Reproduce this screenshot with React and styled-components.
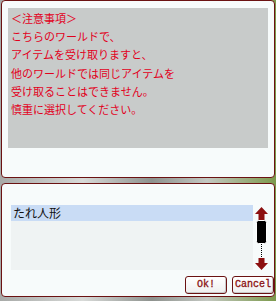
import React from 'react'
import styled, { createGlobalStyle } from 'styled-components';

const Global = createGlobalStyle`
    html, body {
        margin: 0;
        padding: 0;
        width: 276px;
        height: 301px;
        overflow: hidden;
        background: linear-gradient(to right, #a8aaa8 0%, #d8dad8 30%, #8e928e 55%, #c4c8c2 75%, #7c9a4c 100%);
    }
`;

const Screen = styled.div`
    width: 276px;
    height: 301px;
    display: flex;
    flex-direction: column;
    gap: 5px;
    padding: 0 1px;
    box-sizing: border-box;
    font-family: "Noto Sans CJK JP", "Noto Sans", sans-serif;
`;

const Panel = styled.div`
    width: 274px;
    height: ${p => p.h}px;
    box-sizing: border-box;
    border: 1px solid #6b1212;
    border-radius: 4px;
    background: #f7fbfb;
    display: flex;
    flex-direction: column;
`;

const Notice = styled.div`
    margin: 7px 6px 0 6px;
    height: 140px;
    background: #c8cbca;
    padding: 1px 3px;
    box-sizing: border-box;
    color: #e2001c;
    font-size: 11px;
    line-height: 18.2px;
    white-space: pre;
`;

const ListRow = styled.div`
    display: flex;
    margin: 21px 0 0 9px;
    height: 65px;
`;

const List = styled.div`
    width: 242px;
    background: #eff3f3;
`;

const Item = styled.div`
    height: 16px;
    background: ${p => p.selected ? '#c9dcf5' : 'transparent'};
    color: #111;
    font-size: 12px;
    line-height: 16px;
    padding-left: 2px;
`;

const Scroll = styled.svg`
    width: 16px;
    height: 65px;
    display: block;
`;

const Buttons = styled.div`
    display: flex;
    justify-content: flex-end;
    gap: 5px;
    margin-top: 6px;
`;

const Button = styled.button`
    width: 42px;
    height: 18px;
    box-sizing: border-box;
    border: 1px solid #6b1212;
    border-radius: 3px;
    background: linear-gradient(#ffffff, #eeeeee);
    box-shadow: inset -1px -1px 0 #c8c8c8;
    color: #8a1010;
    font-family: "Liberation Mono", "DejaVu Sans Mono", monospace;
    font-weight: normal;
    font-size: 10px;
    padding: 0;
    line-height: 16px;
    -webkit-text-stroke: 0.3px #8a1010;
`;

const notice = `＜注意事項＞
こちらのワールドで、
アイテムを受け取りますと、
他のワールドでは同じアイテムを
受け取ることはできません。
慎重に選択してください。`;

export default function App() {
    return (
        <Screen>
            <Global />
            <Panel h={178}>
                <Notice>{notice}</Notice>
            </Panel>
            <Panel h={114}>
                <ListRow>
                    <List>
                        <Item selected>たれ人形</Item>
                    </List>
                    <Scroll viewBox="0 0 16 65">
                        <path d="M8.5 2 L15 9 L11.5 9 L11.5 15 L5.5 15 L5.5 9 L2 9 Z" fill="#8c1010" />
                        <rect x="3.5" y="15.5" width="10" height="23" rx="2" fill="#000" stroke="#fff" strokeWidth="1" />
                        <line x1="8.5" y1="39" x2="8.5" y2="53" stroke="#000" strokeWidth="1" strokeDasharray="1 1" />
                        <path d="M5.5 53 L11.5 53 L11.5 58 L15 58 L8.5 65 L2 58 L5.5 58 Z" fill="#8c1010" />
                    </Scroll>
                </ListRow>
                <Buttons>
                    <Button>Ok!</Button>
                    <Button>Cancel</Button>
                </Buttons>
            </Panel>
        </Screen>
    )
}
